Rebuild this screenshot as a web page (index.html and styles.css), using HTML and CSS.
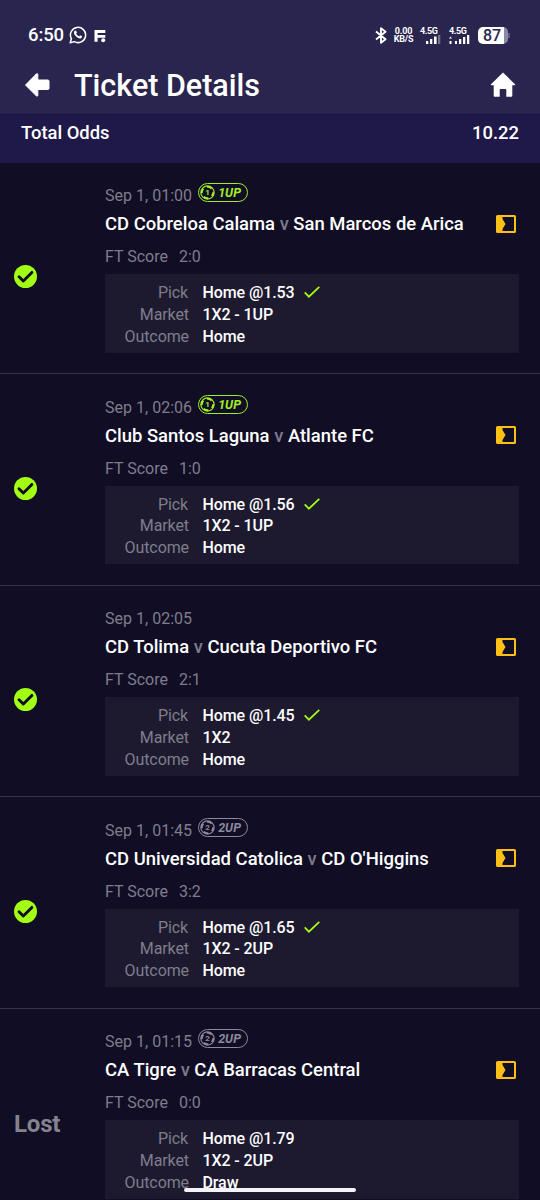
FILE: index.html
```html
<!DOCTYPE html>
<html lang="en">
<head>
<meta charset="utf-8">
<title>Ticket Details</title>
<link rel="stylesheet" href="styles.css">
</head>
<body>
<svg class="defs" width="0" height="0">
  <symbol id="won" viewBox="0 0 22 22"><circle cx="11" cy="11" r="11" fill="#a2ff14"/><path d="M4.8 11.2l4.1 4.1 8.2-8.2" fill="none" stroke="#100d23" stroke-width="2.8" stroke-linecap="round" stroke-linejoin="round"/></symbol>
  <symbol id="tick" viewBox="0 0 18 14"><path d="M1.7 7.3l4.2 4.4L16.3 1.8" fill="none" stroke="#a2ff14" stroke-width="1.7"/></symbol>
  <symbol id="panel" viewBox="0 0 20 18"><rect x="1" y="1" width="18" height="16" rx=".6" fill="none" stroke="#fcbf16" stroke-width="2"/><path d="M1 1h5.500v3L9.500 9l-3 5v3H1z" fill="#fcbf16"/></symbol>
  <symbol id="ball" viewBox="0 0 14 14"><g fill="none" stroke="currentColor"><circle cx="7" cy="7" r="6.2" stroke-width="1.1"/><circle cx="7" cy="7" r="5.3" stroke-width="1.8" stroke-dasharray="4.6 3.7" stroke-dashoffset="1"/></g></symbol>
</svg>
<header class="header">
  <div class="status">
    <span class="clock">6:50</span>
    <svg class="whatsapp" width="18" height="18" viewBox="0 0 18 18"><path d="M1.2 16.8l1.2-4.1A7.6 7.6 0 1 1 5.3 15.6z" fill="none" stroke="#fff" stroke-width="1.5" stroke-linejoin="round"/><path d="M5.5 5.1q1-1.1 1.7-.2l.7 1.6-.8 1.2q1 1.9 3 2.7l1-1.1 2 1q.2 1.5-1.4 2.1-2 .4-4.6-1.9T5 6.6q0-.8.5-1.5z" fill="#fff"/></svg>
    <svg class="flash" width="12" height="14" viewBox="0 0 12 14"><path d="M.5 1h10.8v3H3.6v2h7.7v2.7H3.6v4.1H.5z" fill="#fff"/><circle cx="9.2" cy="11.3" r="2" fill="#fff"/></svg>
    <span class="spacer"></span>
    <svg class="bluetooth" width="12" height="17" viewBox="0 0 12 17"><path d="M1 4.5l9.5 7.7L6 15.8V1.2l4.500 3.6L1 12.5" fill="none" stroke="#fff" stroke-width="1.9" stroke-linejoin="round"/></svg>
    <span class="speed">0.00<br>KB/S</span>
    <span class="signal"><span>4.5G</span><svg width="21" height="9" viewBox="0 0 21 9" fill="#fff"><path d="M6 6h2.300v3H6zM10 4h2.300v5H10zM14 1.500h2.600v7.500H14z"/><path d="M18 0h2.300v9H18z" opacity=".35"/></svg></span>
    <span class="signal second"><span>4.5G</span><svg width="21" height="9" viewBox="0 0 21 9" fill="#fff"><path d="M0 3.500l1.500-2 1.500 2zM.5 6h2v3h-2zM6 6h2v3H6zM10 4h2.300v5H10zM14 2h2.300v7H14zM18 0h2.300v9H18z"/></svg></span>
    <span class="battery">87</span><span class="nub"></span>
  </div>
  <div class="titlebar">
    <svg width="26" height="26" viewBox="0 0 26 26"><path d="M1.500 13L12.500 1.800q1-.6 1.300.5V8h10q1.200 0 1.200 1v7.500q0 1-1.200 1h-10v6q-.3 1.100-1.300.5z" fill="#fff" stroke="#fff" stroke-linejoin="round"/></svg>
    <h1>Ticket Details</h1>
    <svg width="26" height="26" viewBox="0 0 26 26"><path d="M13 .5L1 12.200q-.7 1 .5 1h2.200v10.500q0 1 1 1h5v-7q0-.8.800-.8h5q.8 0 .8.800v7h5q1 0 1-1V13.200h2.200q1.200 0 .5-1z" fill="#fff"/></svg>
  </div>
</header>
<section class="odds"><span>Total Odds</span><span>10.22</span></section>
<main id="bets"></main>
<div class="homebar"></div>
<script src="app.js"></script>
</body>
</html>
```
FILE: app.js
```js
const bets = [
  ['Sep 1, 01:00', 1, 'CD Cobreloa Calama', 'San Marcos de Arica', '2:0', '1.53', 'Home', true],
  ['Sep 1, 02:06', 1, 'Club Santos Laguna', 'Atlante FC', '1:0', '1.56', 'Home', true],
  ['Sep 1, 02:05', 0, 'CD Tolima', 'Cucuta Deportivo FC', '2:1', '1.45', 'Home', true],
  ['Sep 1, 01:45', 2, 'CD Universidad Catolica', "CD O'Higgins", '3:2', '1.65', 'Home', true],
  ['Sep 1, 01:15', 2, 'CA Tigre', 'CA Barracas Central', '0:0', '1.79', 'Draw', false]
];
const icon = (id, w, h) => `<svg class="${id}" width="${w}" height="${h}"><use href="#${id}"/></svg>`;
const pill = n => n ? `<span class="pill up${n}"><span class="ballwrap">${icon('ball', 15, 15)}<b>${n}</b></span><i>${n}UP</i></span>` : '';
document.getElementById('bets').innerHTML = bets.map(([date, up, home, away, score, odd, outcome, won]) => `
<article class="bet">
  <div class="result">${won ? icon('won', 23, 23) : '<span class="lost">Lost</span>'}</div>
  <div class="body">
    <div class="date"><span>${date}</span>${pill(up)}</div>
    <div class="match"><h2>${home} <span>v</span> ${away}</h2>${icon('panel', 20, 18)}</div>
    <div class="score"><span>FT Score</span><span>${score}</span></div>
    <dl class="details">
      <dt class="pick">Pick</dt><dd>Home @${odd}${won ? icon('tick', 18, 14) : ''}</dd>
      <dt>Market</dt><dd>1X2${up ? ` - ${up}UP` : ''}</dd>
      <dt>Outcome</dt><dd>${outcome}</dd>
    </dl>
  </div>
</article>`).join('');
```
FILE: styles.css
```css
* { box-sizing: border-box; }
body { margin: 0; width: 540px; height: 1200px; overflow: hidden; background: #100d25; color: #fff; font-family: Roboto, sans-serif; position: relative; }
h1, h2, dl, dd { margin: 0; }
svg { display: block; flex: none; }
.defs { position: absolute; }
.header { height: 113px; background: #29254f; }
.status { height: 70px; padding: 0 30px 0 28px; display: flex; align-items: center; }
.clock { font-size: 18.5px; font-weight: 500; letter-spacing: -.1px; }
.whatsapp { margin-left: 5px; }
.flash { margin: 1px 0 0 7px; }
.spacer { flex: 1; }
.speed { margin-left: 7px; width: 19px; font-size: 9px; line-height: 8px; font-weight: 700; display: flex; justify-content: center; text-align: center; white-space: nowrap; letter-spacing: -.2px; }
.signal { width: 22px; margin-left: 7px; font-size: 9px; line-height: 8px; font-weight: 700; display: flex; flex-direction: column; align-items: flex-start; letter-spacing: -.4px; }
.battery { width: 30px; height: 17px; padding-right: 2px; margin-left: 7px; border-radius: 5px; background: linear-gradient(90deg, #fff 87%, #8a88a4 87%); color: #29254f; font-size: 16px; line-height: 18px; font-weight: 500; text-align: center; }
.nub { width: 2px; height: 5px; background: #5b587c; }
.titlebar { height: 30px; padding: 0 24px; display: flex; align-items: center; }
h1 { flex: 1; margin-left: 24px; padding-top: 2px; font-size: 30.5px; line-height: 30px; font-weight: 500; }
.odds { height: 49.5px; padding: 8px 21px; background: #1f194a; border-top: 1px solid #252049; display: flex; justify-content: space-between; font-size: 18.4px; line-height: 21px; font-weight: 500; }
.bet { height: 211.5px; display: flex; border-bottom: 1.5px solid #35314f; }
.result { width: 105px; padding-left: 14px; padding-top: 18px; display: flex; align-items: center; }
.lost { padding-top: 2px; font-size: 24px; font-weight: 700; letter-spacing: -.2px; color: #85838e; }
.body { flex: 1; padding: 22.500px 21px 0 0; }
.date { height: 22px; display: flex; color: #7f7d8b; font-size: 16px; line-height: 21px; letter-spacing: .02px; }
.pill { width: 50px; height: 19px; margin: -2px 0 0 6px; padding-left: 1px; border: 1.5px solid; border-radius: 10px; display: flex; align-items: center; gap: 3px; }
.pill i { font-size: 12.5px; line-height: 15px; font-weight: 700; }
.up1 { color: #a2ee26; }
.up2 { color: #8b899c; }
.ballwrap { display: grid; place-items: center; }
.ballwrap > * { grid-area: 1 / 1; }
.ballwrap b { font-size: 8px; line-height: 15px; font-weight: 700; }
.match { height: 34px; display: flex; align-items: center; justify-content: space-between; padding-right: 3px; }
.panel { margin-top: -1px; }
h2 { font-size: 18.45px; line-height: 24px; font-weight: 500; white-space: nowrap; }
h2 span { color: #7d7b8a; }
.score { height: 33px; display: flex; gap: 11px; color: #7f7d8b; font-size: 16px; line-height: 31px; }
.details { height: 78.5px; padding: 8px 0 0; background: #1d1a2f; display: grid; grid-template-columns: 84px 1fr; column-gap: 13.5px; grid-auto-rows: 21.8px; font-size: 16px; line-height: 22px; }
dt { color: #7f7d8b; text-align: right; letter-spacing: -.1px; }
.pick { padding-right: 1px; }
dd { font-weight: 500; display: flex; letter-spacing: -.1px; }
.tick { margin: 3px 0 0 8px; }
.homebar { position: absolute; left: 184px; top: 1188px; width: 172px; height: 4px; border-radius: 2px; background: #f4f3f7; }
```
